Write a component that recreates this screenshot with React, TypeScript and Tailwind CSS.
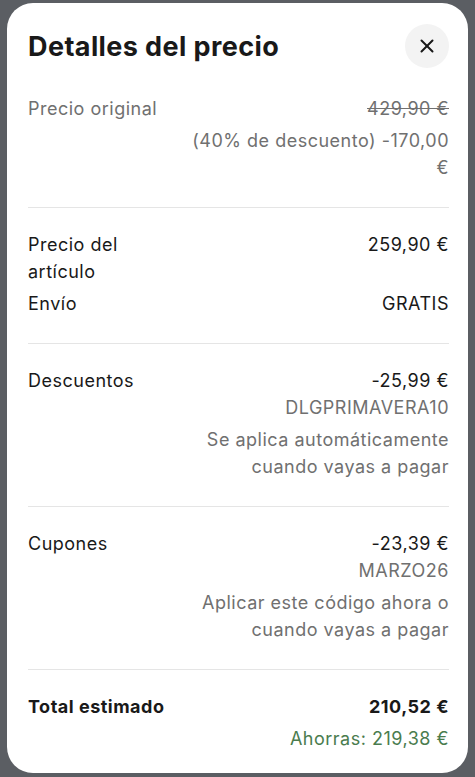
import type { ReactNode } from "react";
import { X } from "lucide-react";

type Line = { text: ReactNode; tone?: "main" | "muted" | "green" | "strike"; gap?: boolean };

function Row({ label, labelTone = "main", bold, lines }: { label: string; labelTone?: "main" | "muted"; bold?: boolean; lines: Line[] }) {
  return (
    <div className="flex justify-between gap-2">
      <div className={`w-[145px] shrink-0 ${bold ? "font-bold text-[#191919]" : labelTone === "muted" ? "text-[#707070]" : "text-[#191919]"}`}>
        {label}
      </div>
      <div className="flex w-[262px] flex-col items-end text-right">
        {lines.map((l, i) => (
          <p
            key={i}
            className={[
              i > 0 && l.gap ? "mt-[5px]" : "",
              l.tone === "muted" ? "text-[#707070]" : "",
              l.tone === "strike" ? "text-[#707070] line-through" : "",
              l.tone === "green" ? "text-[#4a7c4e]" : "",
              !l.tone || l.tone === "main" ? "text-[#191919]" : "",
              bold && i === 0 ? "font-bold" : "",
            ].join(" ")}
          >
            {l.text}
          </p>
        ))}
      </div>
    </div>
  );
}

function Section({ children, last }: { children: ReactNode; last?: boolean }) {
  return (
    <div className={`flex flex-col gap-[5px] pt-[23px] ${last ? "pb-0" : "border-b border-[#e5e5e5] pb-[26px]"}`}>
      {children}
    </div>
  );
}

export default function App() {
  return (
    <div className="h-[777px] w-[475px] overflow-hidden bg-[#5b5e63] px-[7px] pt-[3px]" style={{ fontFamily: "Inter, 'Noto Sans', sans-serif" }}>
      <div className="h-[770px] rounded-[26px] bg-white pl-[21px] pr-[19px] pt-[21px] text-[18px] leading-[27px] tracking-[0.5px]">
        <div className="flex items-center justify-between">
          <h1 className="text-[27px] font-bold tracking-[0.4px] text-[#191919]">Detalles del precio</h1>
          <button type="button" className="flex h-[44px] w-[44px] items-center justify-center rounded-full bg-[#f3f3f3]">
            <X className="h-[22px] w-[22px] text-[#191919]" strokeWidth={2.2} />
          </button>
        </div>

        <div className="mt-[4px]">
          <Section>
            <Row
              label="Precio original"
              labelTone="muted"
              lines={[
                { text: "429,90 €", tone: "strike" },
                {
                  text: (
                    <>
                      <span className="whitespace-nowrap">(40% de descuento) -170,00</span> €
                    </>
                  ),
                  tone: "muted",
                  gap: true,
                },
              ]}
            />
          </Section>
          <Section>
            <Row label="Precio del artículo" lines={[{ text: "259,90 €" }]} />
            <Row label="Envío" lines={[{ text: "GRATIS" }]} />
          </Section>
          <Section>
            <Row
              label="Descuentos"
              lines={[
                { text: "-25,99 €" },
                { text: "DLGPRIMAVERA10", tone: "muted" },
                { text: "Se aplica automáticamente cuando vayas a pagar", tone: "muted", gap: true },
              ]}
            />
          </Section>
          <Section>
            <Row
              label="Cupones"
              lines={[
                { text: "-23,39 €" },
                { text: "MARZO26", tone: "muted" },
                { text: "Aplicar este código ahora o cuando vayas a pagar", tone: "muted", gap: true },
              ]}
            />
          </Section>
          <Section last>
            <Row
              label="Total estimado"
              bold
              lines={[
                { text: "210,52 €" },
                { text: "Ahorras: 219,38 €", tone: "green", gap: true },
              ]}
            />
          </Section>
        </div>
      </div>
    </div>
  );
}
